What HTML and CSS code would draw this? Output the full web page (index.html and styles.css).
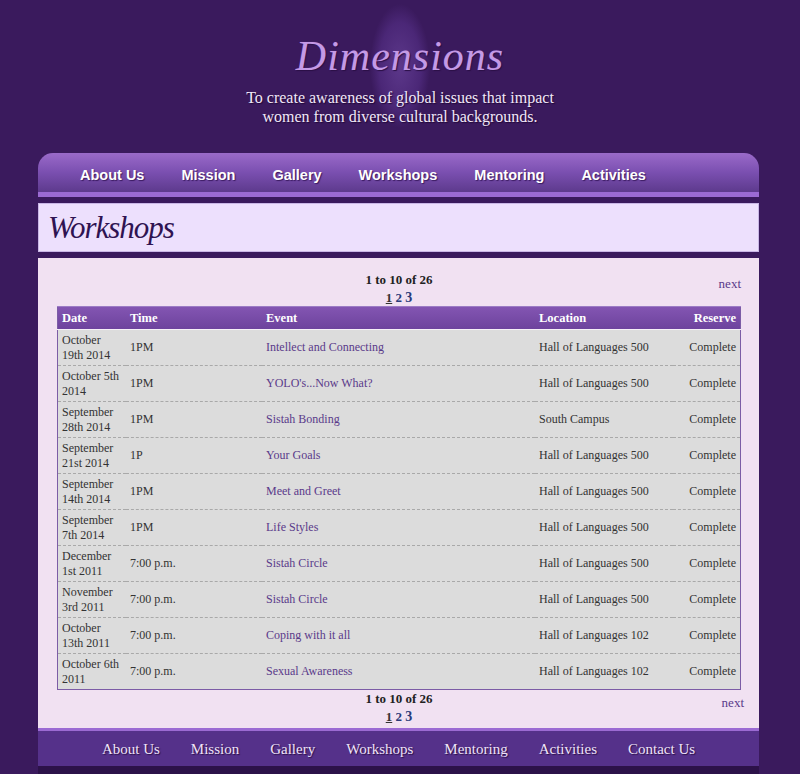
FILE: index.html
```html
<!DOCTYPE html>
<html>
<head>
<meta charset="utf-8">
<title>Workshops - Dimensions</title>
<link rel="stylesheet" href="styles.css">
</head>
<body>
<header class="masthead">
  <h1 class="site-title">Dimensions</h1>
  <p class="tagline">To create awareness of global issues that impact<br>women from diverse cultural backgrounds.</p>
</header>
<div class="wrap">
  <nav class="topnav">
    <a href="#">About Us</a>
    <a href="#">Mission</a>
    <a href="#">Gallery</a>
    <a href="#">Workshops</a>
    <a href="#">Mentoring</a>
    <a href="#">Activities</a>
  </nav>
  <div class="page-head"><h2>Workshops</h2></div>
  <main class="content">
    <div class="pager">
      <div class="pager-center">
        <div class="count">1 to 10 of 26</div>
        <div class="pages"><span class="cur">1</span> <a href="#">2</a> <a href="#" class="big">3</a></div>
      </div>
      <a class="next" href="#">next</a>
    </div>
    <table class="events">
      <thead>
        <tr><th class="c-date">Date</th><th class="c-time">Time</th><th class="c-event">Event</th><th class="c-loc">Location</th><th class="c-res">Reserve</th></tr>
      </thead>
      <tbody>
        <tr><td>October 19th 2014</td><td>1PM</td><td><a href="#">Intellect and Connecting</a></td><td>Hall of Languages 500</td><td class="c-res">Complete</td></tr>
        <tr><td>October 5th 2014</td><td>1PM</td><td><a href="#">YOLO's...Now What?</a></td><td>Hall of Languages 500</td><td class="c-res">Complete</td></tr>
        <tr><td>September 28th 2014</td><td>1PM</td><td><a href="#">Sistah Bonding</a></td><td>South Campus</td><td class="c-res">Complete</td></tr>
        <tr><td>September 21st 2014</td><td>1P</td><td><a href="#">Your Goals</a></td><td>Hall of Languages 500</td><td class="c-res">Complete</td></tr>
        <tr><td>September 14th 2014</td><td>1PM</td><td><a href="#">Meet and Greet</a></td><td>Hall of Languages 500</td><td class="c-res">Complete</td></tr>
        <tr><td>September 7th 2014</td><td>1PM</td><td><a href="#">Life Styles</a></td><td>Hall of Languages 500</td><td class="c-res">Complete</td></tr>
        <tr><td>December 1st 2011</td><td>7:00 p.m.</td><td><a href="#">Sistah Circle</a></td><td>Hall of Languages 500</td><td class="c-res">Complete</td></tr>
        <tr><td>November 3rd 2011</td><td>7:00 p.m.</td><td><a href="#">Sistah Circle</a></td><td>Hall of Languages 500</td><td class="c-res">Complete</td></tr>
        <tr><td>October 13th 2011</td><td>7:00 p.m.</td><td><a href="#">Coping with it all</a></td><td>Hall of Languages 102</td><td class="c-res">Complete</td></tr>
        <tr><td>October 6th 2011</td><td>7:00 p.m.</td><td><a href="#">Sexual Awareness</a></td><td>Hall of Languages 102</td><td class="c-res">Complete</td></tr>
      </tbody>
    </table>
    <div class="pager pager-bottom">
      <div class="pager-center">
        <div class="count">1 to 10 of 26</div>
        <div class="pages"><span class="cur">1</span> <a href="#">2</a> <a href="#" class="big">3</a></div>
      </div>
      <a class="next" href="#">next</a>
    </div>
  </main>
  <footer class="footnav">
    <a href="#">About Us</a>
    <a href="#">Mission</a>
    <a href="#">Gallery</a>
    <a href="#">Workshops</a>
    <a href="#">Mentoring</a>
    <a href="#">Activities</a>
    <a href="#">Contact Us</a>
  </footer>
</div>
</body>
</html>
```
FILE: styles.css
```css
html, body {
  margin: 0;
  padding: 0;
}
body {
  background: #3a1a5d;
  font-family: "Liberation Serif", "DejaVu Serif", serif;
  color: #333;
}
a { text-decoration: none; }

.masthead {
  height: 153px;
  display: flex;
  flex-direction: column;
  align-items: center;
  background:
    radial-gradient(ellipse 30px 62px at 400px 66px, rgba(120,80,175,0.55) 0%, rgba(95,55,150,0.45) 70%, rgba(70,40,120,0) 100%);
}
.site-title {
  margin: 32px 0 0;
  font: italic normal 42px/48px "Liberation Serif", serif;
  letter-spacing: 1px;
  color: #c49ae6;
  text-shadow: 1px 1px 1px #2a0f45, 0 0 1px #6a3f99;
}
.tagline {
  margin: 8px 0 0;
  text-align: center;
  font: 16px/19px "Liberation Serif", serif;
  color: #f1e8f8;
  text-shadow: 1px 1px 1px #22083a;
}

.wrap {
  width: 721px;
  margin-left: 38px;
}

.topnav {
  height: 39px;
  border-radius: 15px 15px 0 0;
  background: linear-gradient(#9a6ac9, #7a4fb0 50%, #5d3a8d);
  border-bottom: 5px solid #9b6ad3;
  display: flex;
  align-items: center;
  padding-left: 42px;
  gap: 37px;
}
.topnav a {
  color: #fff;
  font: bold 14.5px "Liberation Sans", Arial, sans-serif;
  text-shadow: 1px 1px 1px #3a1a60;
  margin-top: 5px;
}

.page-head {
  margin-top: 6px;
  height: 47px;
  background: #ede0fd;
  border: 1px solid #c9b6e6;
  display: flex;
  align-items: center;
  padding-left: 9px;
}
.page-head h2 {
  margin: 0;
  font: italic normal 31px "Liberation Serif", serif;
  letter-spacing: -1px;
  color: #2f1352;
}

.content {
  margin-top: 6px;
  background: #f1e1f2;
  padding: 13px 18px 0 19px;
}

.pager {
  display: flex;
  position: relative;
  justify-content: center;
  height: 35px;
}
.pager-center {
  text-align: center;
  font-size: 13px;
  font-weight: bold;
  color: #222;
}
.count { line-height: 18px; }
.pages { line-height: 17px; }
.pages .cur { text-decoration: underline; color: #333; }
.pages a { color: #2a3a7a; }
.pages a.big { font-size: 14px; }
.next {
  position: absolute;
  right: 0;
  top: 5px;
  font-size: 13px;
  color: #5a3a8a;
}
.pager-bottom { height: 38px; }
.pager-bottom .next { top: 5px; right: -3px; }

.events {
  width: 100%;
  border-collapse: collapse;
  border: 1px solid #7c5ca6;
  background: #dcdcdc;
  font-size: 12px;
}
.events thead tr {
  background: linear-gradient(#8355b2, #6c429c);
}
.events th {
  color: #fff;
  font-weight: bold;
  text-align: left;
  height: 22px;
  padding: 0 4px;
  border-bottom: 1px solid #f5f0f7;
  border-top: 1px solid #9c7cc5;
  font-size: 12.5px;
}
.events td {
  height: 35px;
  padding: 0 4px;
  border-bottom: 1px dashed #a9a9a9;
  line-height: 15px;
}
.events tbody tr:last-child td { border-bottom: none; }
.events td a { color: #5a3a8a; }
.c-date { width: 60px; }
.c-time { width: 128px; }
.c-event { width: 265px; }
.c-loc { width: 130px; }
.events th.c-res, .events td.c-res { text-align: right; }

.footnav {
  border-top: 3px solid #9b6ad3;
  background: #55318a;
  height: 35px;
  display: flex;
  justify-content: center;
  align-items: center;
  gap: 31px;
  border-bottom: 8px solid #2c1249;
}
.footnav a {
  color: #efe3f8;
  font: 15px "Liberation Serif", serif;
  text-shadow: 1px 1px 1px #2a0f48;
  margin-top: 2px;
}
```
